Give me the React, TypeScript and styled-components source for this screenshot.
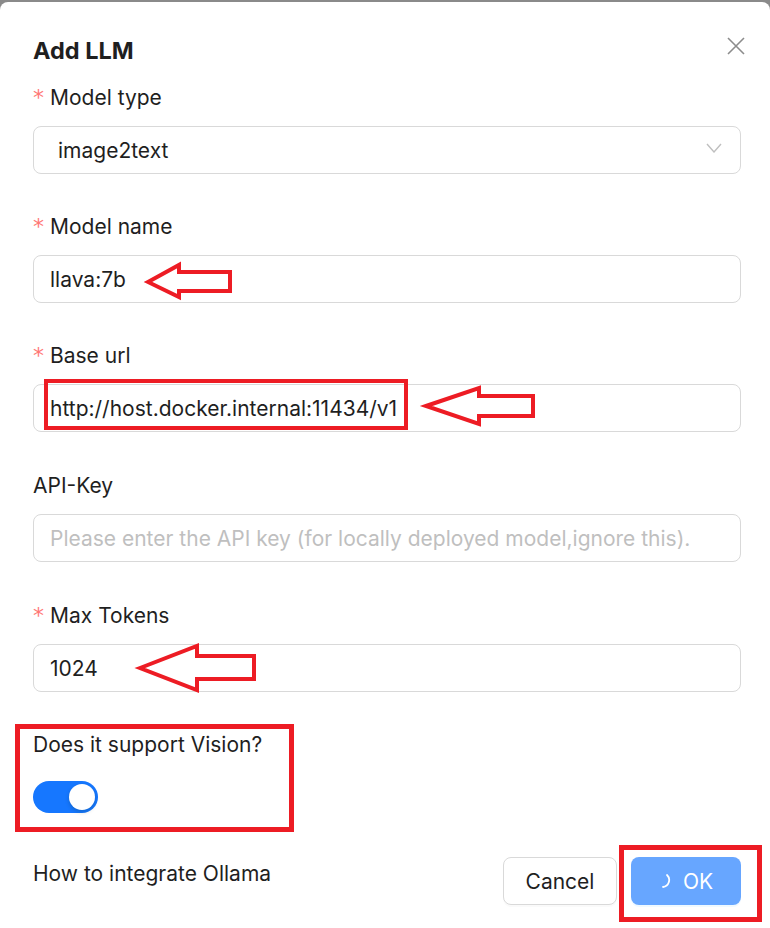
import React, { useState } from "react";
import styled, { createGlobalStyle } from "styled-components";

const GlobalStyle = createGlobalStyle`
	html, body {
		margin: 0;
		padding: 0;
		background: #8a8a8a;
		font-family: Inter, "Noto Sans", "Liberation Sans", sans-serif;
		color: #1f1f1f;
	}
	* {
		box-sizing: border-box;
	}
`;

const Modal = styled("div")`
	margin-top: 2px;
	width: 770px;
	min-height: 926px;
	background: #ffffff;
	border-radius: 8px 8px 0 0;
	padding: 35px 29px 0 33px;
`;

const Header = styled("div")`
	display: flex;
	justify-content: space-between;
	align-items: flex-start;
	margin-bottom: 19px;

	h3 {
		margin: 0;
		font-size: 23.5px;
		line-height: 28px;
		font-weight: 700;
	}
`;

const CloseButton = styled("button")`
	margin: 0 -4px 0 0;
	padding: 0;
	width: 18px;
	height: 18px;
	border: none;
	background: none;
	color: #8c8c8c;
	display: flex;
	cursor: pointer;
`;

const Field = styled("div")`
	position: relative;
	margin-bottom: 39px;

	&:nth-of-type(n + 4) {
		margin-bottom: 40px;
	}
`;

const Label = styled("label")`
	display: flex;
	align-items: center;
	height: 28px;
	margin-bottom: 14px;
	font-size: 21px;
	line-height: 28px;

	span {
		color: #ff7875;
		font-family: "DejaVu Sans", sans-serif;
		font-size: 22px;
		margin-right: 6px;
	}
`;

const InputWrap = styled("div")`
	position: relative;
`;

const Input = styled("input")`
	display: block;
	width: 100%;
	height: 48px;
	padding: 0 16px;
	border: 1px solid #d9d9d9;
	border-radius: 8px;
	font-family: inherit;
	font-size: 21px;
	color: #1f1f1f;
	background: #fff;
	outline: none;

	&::placeholder {
		color: #bfbfbf;
	}
`;

const Select = styled("div")`
	display: flex;
	align-items: center;
	justify-content: space-between;
	height: 48px;
	padding: 0 18px 0 24px;
	border: 1px solid #d9d9d9;
	border-radius: 8px;
	font-size: 21px;
	color: #1f1f1f;

	svg {
		color: #bfbfbf;
		margin-top: -4px;
	}
`;

const Annotation = styled("svg")`
	position: absolute;
	left: 0;
	top: 0;
	width: 100%;
	height: 100%;
	overflow: visible;
	pointer-events: none;

	polygon {
		fill: none;
		stroke: #ed1c24;
		stroke-width: 4;
		stroke-linejoin: miter;
	}
`;

const RedBox = styled("div")<{ $x: number; $y: number; $w: number; $h: number; $t: number }>`
	position: absolute;
	left: ${(p) => p.$x}px;
	top: ${(p) => p.$y}px;
	width: ${(p) => p.$w}px;
	height: ${(p) => p.$h}px;
	border: ${(p) => p.$t}px solid #ed1c24;
	pointer-events: none;
`;

const VisionField = styled("div")`
	position: relative;
	margin-top: -1px;
	display: flex;
	flex-direction: column;
	align-items: flex-start;
	gap: 22px;

	p {
		margin: 0;
		font-size: 21px;
		line-height: 28px;
	}
`;

const Switch = styled("button")<{ $on: boolean }>`
	position: relative;
	width: 65px;
	height: 32px;
	border: none;
	padding: 0;
	border-radius: 16px;
	background: ${(p) => (p.$on ? "#1677ff" : "#bfbfbf")};
	cursor: pointer;

	&::after {
		content: "";
		position: absolute;
		top: 3px;
		left: ${(p) => (p.$on ? "36px" : "3px")};
		width: 26px;
		height: 26px;
		border-radius: 50%;
		background: #fff;
		box-shadow: 0 2px 4px rgba(0, 35, 11, 0.2);
	}
`;

const Footer = styled("div")`
	display: flex;
	justify-content: space-between;
	align-items: flex-start;
	margin-top: 44px;
`;

const HelpLink = styled("a")`
	margin-top: 1px;
	font-size: 21px;
	line-height: 32px;
	color: #1f1f1f;
	text-decoration: none;
`;

const Buttons = styled("div")`
	display: flex;
	gap: 14px;
`;

const Button = styled("button")<{ $primary?: boolean }>`
	position: relative;
	display: flex;
	align-items: center;
	justify-content: center;
	gap: 12px;
	width: ${(p) => (p.$primary ? "110px" : "114px")};
	height: 48px;
	padding: 0;
	border-radius: 8px;
	font-family: inherit;
	font-size: 21px;
	border: 1px solid ${(p) => (p.$primary ? "transparent" : "#d9d9d9")};
	background: ${(p) => (p.$primary ? "#67a6ff" : "#fff")};
	color: ${(p) => (p.$primary ? "#fff" : "#1f1f1f")};
	box-shadow: 0 2px 0 ${(p) => (p.$primary ? "rgba(5, 145, 255, 0.06)" : "rgba(0, 0, 0, 0.02)")};
	cursor: pointer;
`;

function Arrow({ points }: { points: string }) {
	return (
		<Annotation>
			<polygon points={points} />
		</Annotation>
	);
}

export default function App() {
	const [vision, setVision] = useState(true);

	return (
		<>
			<GlobalStyle />
			<Modal>
				<Header>
					<h3>Add LLM</h3>
					<CloseButton aria-label="close">
						<svg width="18" height="18" viewBox="0 0 18 18" fill="none" stroke="currentColor" strokeWidth="1.6">
							<path d="M1 1L17 17M17 1L1 17" />
						</svg>
					</CloseButton>
				</Header>

				<Field>
					<Label>
						<span>*</span>Model type
					</Label>
					<Select>
						image2text
						<svg width="16" height="10" viewBox="0 0 16 10" fill="none" stroke="currentColor" strokeWidth="1.4">
							<path d="M1 1L8 9L15 1" />
						</svg>
					</Select>
				</Field>

				<Field>
					<Label>
						<span>*</span>Model name
					</Label>
					<InputWrap>
						<Input defaultValue="llava:7b" />
						<Arrow points="115,27 146,10 146,17 197,17 197,36 146,36 146,42" />
					</InputWrap>
				</Field>

				<Field>
					<Label>
						<span>*</span>Base url
					</Label>
					<InputWrap>
						<Input defaultValue="http://host.docker.internal:11434/v1" />
						<RedBox $x={11} $y={-5} $w={364} $h={51} $t={4} />
						<Arrow points="393,22 446,4 446,12 500,12 500,32 446,32 446,40" />
					</InputWrap>
				</Field>

				<Field>
					<Label>API-Key</Label>
					<InputWrap>
						<Input placeholder="Please enter the API key (for locally deployed model,ignore this)." />
					</InputWrap>
				</Field>

				<Field>
					<Label>
						<span>*</span>Max Tokens
					</Label>
					<InputWrap>
						<Input defaultValue="1024" />
						<Arrow points="107,24 164,2 164,12 221,12 221,35 164,35 164,46" />
					</InputWrap>
				</Field>

				<VisionField>
					<p>Does it support Vision?</p>
					<Switch $on={vision} onClick={() => setVision(!vision)} aria-label="vision" />
					<RedBox $x={-18} $y={-7} $w={279} $h={108} $t={5} />
				</VisionField>

				<Footer>
					<HelpLink href="#">How to integrate Ollama</HelpLink>
					<Buttons>
						<Button>Cancel</Button>
						<Button $primary>
							<svg width="12" height="16" viewBox="0 0 12 16" fill="none" stroke="#fff" strokeWidth="1.8" strokeLinecap="round">
								<path d="M6 2A7 7 0 0 1 2 14" transform="translate(2 0)" />
							</svg>
							OK
							<RedBox $x={-13} $y={-13} $w={143} $h={77} $t={5} />
						</Button>
					</Buttons>
				</Footer>
			</Modal>
		</>
	);
}
